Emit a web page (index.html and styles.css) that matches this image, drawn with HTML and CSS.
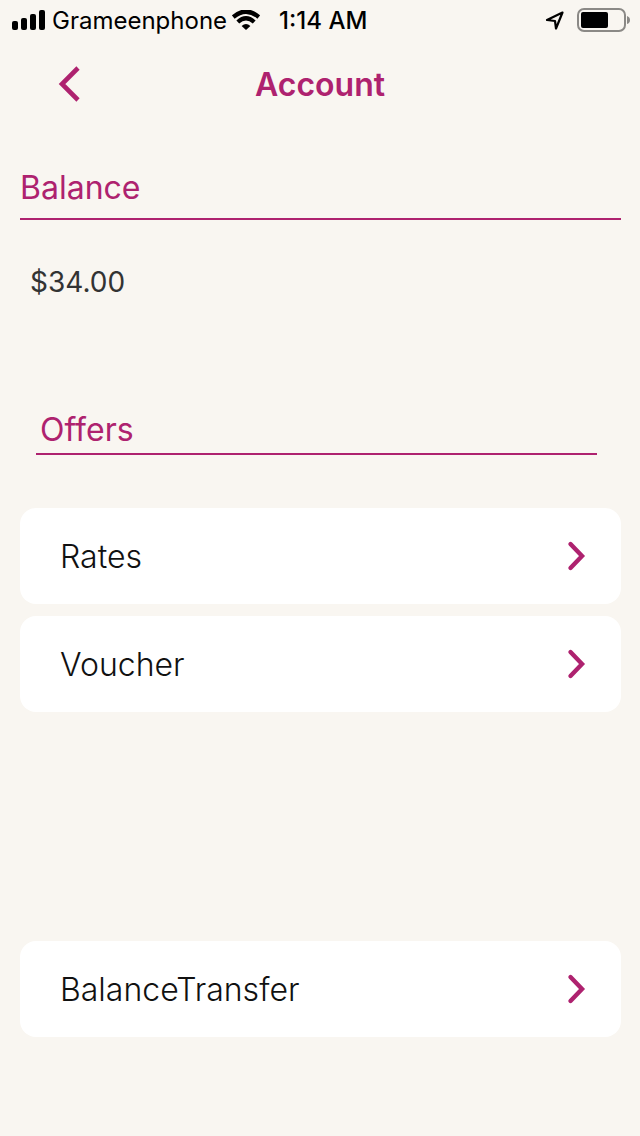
FILE: index.html
```html
<!DOCTYPE html>
<html lang="en">
<head>
    <meta charset="UTF-8">
    <meta name="viewport" content="width=device-width, initial-scale=1.0">
    <title>Account</title>
    <link rel="stylesheet" href="styles.css">
</head>
<body>
    <div class="status-bar">
        <svg class="signal" width="34" height="20" viewBox="0 0 34 20" aria-hidden="true">
            <rect x="0" y="11" width="6" height="9" rx="2"/>
            <rect x="9" y="8" width="6" height="12" rx="2"/>
            <rect x="18" y="4" width="6" height="16" rx="2"/>
            <rect x="27" y="0" width="6" height="20" rx="2"/>
        </svg>
        <span class="carrier">Grameenphone</span>
        <svg class="wifi" width="28" height="20" viewBox="0 0 28 20" aria-hidden="true">
            <path d="M1.2 7 Q14 -3.8 26.8 7" fill="none" stroke="#000" stroke-width="4.4"/>
            <path d="M5.8 12 Q14 4.6 22.2 12" fill="none" stroke="#000" stroke-width="4.2"/>
            <path d="M9.6 16 Q14 12 18.4 16 L14 20 Z"/>
        </svg>
        <span class="time">1:14 AM</span>
        <svg class="location" width="20" height="20" viewBox="0 0 20 20" aria-hidden="true">
            <path d="M17.5 2.5 L2 10 L10 11 L11 18.5 Z" fill="none" stroke="#000" stroke-width="2.2" stroke-linejoin="round"/>
        </svg>
        <svg class="battery" width="54" height="24" viewBox="0 0 54 24" aria-hidden="true">
            <rect x="1" y="1" width="47" height="22" rx="6" fill="none" stroke="#8b8986" stroke-width="2"/>
            <rect x="4" y="4" width="27" height="16" rx="2"/>
            <path d="M50 8 Q53 9 53 12 Q53 15 50 16 Z" fill="#8b8986"/>
        </svg>
    </div>

    <header class="header">
        <button type="button" class="back" aria-label="Back">
            <svg width="22" height="36" viewBox="0 0 22 36">
                <path d="M20 2 L4 18 L20 34" fill="none" stroke="currentColor" stroke-width="4.6"/>
            </svg>
        </button>
        <h1>Account</h1>
    </header>

    <main>
        <section class="balance">
            <h2>Balance</h2>
            <p class="amount">$34.00</p>
        </section>

        <section class="offers">
            <h2>Offers</h2>
            <nav class="links">
                <a href="#rates" class="card">
                    Rates
                    <svg width="20" height="32" viewBox="0 0 20 32" aria-hidden="true">
                        <path d="M3.5 4 L15 16 L3.5 28" fill="none" stroke="currentColor" stroke-width="4.4" stroke-linecap="round"/>
                    </svg>
                </a>
                <a href="#voucher" class="card">
                    Voucher
                    <svg width="20" height="32" viewBox="0 0 20 32" aria-hidden="true">
                        <path d="M3.5 4 L15 16 L3.5 28" fill="none" stroke="currentColor" stroke-width="4.4" stroke-linecap="round"/>
                    </svg>
                </a>
                <a href="#transfer" class="card transfer">
                    BalanceTransfer
                    <svg width="20" height="32" viewBox="0 0 20 32" aria-hidden="true">
                        <path d="M3.5 4 L15 16 L3.5 28" fill="none" stroke="currentColor" stroke-width="4.4" stroke-linecap="round"/>
                    </svg>
                </a>
            </nav>
        </section>
    </main>
</body>
</html>
```
FILE: styles.css
```css
* {
    box-sizing: border-box;
}

body {
    font-family: Inter, "Liberation Sans", sans-serif;
    margin: 0;
    background-color: #f9f6f1;
    color: #111;
}

h1, h2, p {
    margin: 0;
}

h1, h2, .back, .card svg {
    color: #ae226f;
}

/* phone status bar */
.status-bar {
    display: flex;
    align-items: center;
    height: 40px;
    padding: 0 9px 0 12px;
    font-size: 24px;
    color: #000;
}

.carrier {
    margin: 0 5px 0 6px;
}

.time {
    margin-left: 19px;
    font-weight: 500;
}

.location {
    margin-left: auto;
}

.battery {
    margin-left: 12px;
}

.header {
    display: grid;
    grid-template-columns: 80px 1fr 80px;
    align-items: center;
    height: 88px;
    padding: 0 20px;
}

.header h1 {
    font-size: 32px;
    font-weight: 600;
    text-align: center;
}

.back {
    justify-self: end;
    padding: 0 20px;
    border: none;
    background: none;
    cursor: pointer;
    line-height: 0;
}

main {
    padding: 36px 19px 99px 20px;
}

h2 {
    border-bottom: 2px solid #ae226f;
    font-size: 32px;
    font-weight: 400;
    line-height: 46px;
}

.balance h2 {
    padding: 1px 0 7px;
}

.amount {
    padding: 42px 10px;
    font-size: 28px;
    line-height: 40px;
    color: #333;
}

.offers {
    padding-top: 63px;
}

.offers h2 {
    margin: 0 24px 0 16px;
    padding-left: 4px;
}

.links {
    display: flex;
    flex-direction: column;
    gap: 12px;
    margin-top: 53px;
}

.card {
    display: flex;
    align-items: center;
    justify-content: space-between;
    height: 96px;
    padding: 0 34px 0 40px;
    border-radius: 16px;
    background-color: #fff;
    color: #111;
    font-size: 32px;
    font-weight: 300;
    text-decoration: none;
}

.transfer {
    margin-top: 217px;
}
```
